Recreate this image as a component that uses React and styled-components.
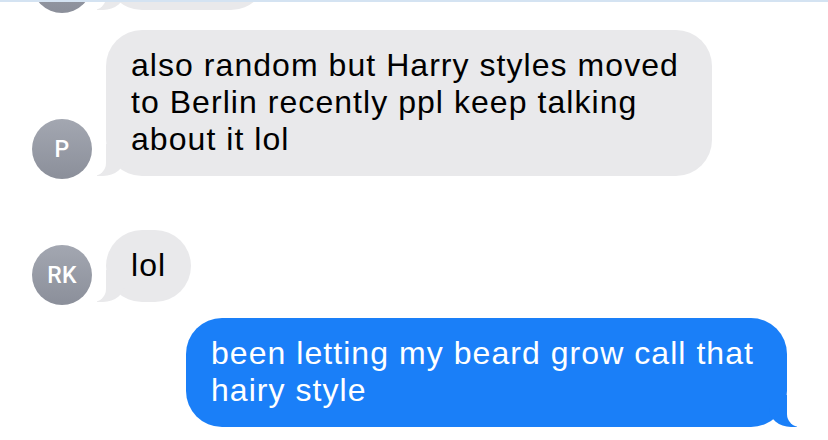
import React from "react";
import styled, { createGlobalStyle } from "styled-components";

const GlobalStyle = createGlobalStyle`
  html, body { margin: 0; padding: 0; background: #ffffff; }
  body { font-family: "Liberation Sans", Arial, sans-serif; }
  * { box-sizing: border-box; }
`;

const Page = styled.div`
  width: 828px;
  height: 440px;
  overflow: hidden;
  background: #ffffff;
  border-top: 2px solid #d4e3f2;
`;

const Thread = styled.div`
  display: flex;
  flex-direction: column;
  margin-top: -64px;
`;

const Row = styled.div`
  display: flex;
  align-items: flex-end;
  justify-content: ${(p) => (p.$mine ? "flex-end" : "flex-start")};
  margin-top: ${(p) => p.$gap || 0}px;
  padding: ${(p) => (p.$mine ? "0 41px 0 0" : "0 0 0 32px")};
`;

const Avatar = styled.div`
  position: relative;
  z-index: 3;
  flex: 0 0 auto;
  width: 60px;
  height: 60px;
  border-radius: 50%;
  background: linear-gradient(180deg, #a3a7b1 0%, #8b8f9a 100%);
  color: #ffffff;
  display: flex;
  align-items: center;
  justify-content: center;
  font-family: Roboto, "Liberation Sans", Arial, sans-serif;
  font-size: 23px;
  font-weight: 500;
  letter-spacing: 0.2px;
`;

const Bubble = styled.div`
  position: relative;
  margin: ${(p) => (p.$mine ? "0" : "0 0 3px 14px")};
  max-width: ${(p) => p.$max || 606}px;
  width: ${(p) => (p.$w ? `${p.$w}px` : "auto")};
  min-height: 72px;
  padding: 17px 25px 18px 25px;
  border-radius: 36px;
  background: ${(p) => (p.$mine ? "#1a7ff8" : "#e9e9eb")};
  color: ${(p) => (p.$mine ? "#ffffff" : "#000000")};
  font-family: "Liberation Sans", Arial, sans-serif;
  font-size: 32px;
  line-height: 37px;
  letter-spacing: 1.05px;

  &::before {
    content: "";
    position: absolute;
    bottom: 0;
    height: 32px;
    width: 28px;
    background: ${(p) => (p.$mine ? "#1a7ff8" : "#e9e9eb")};
    ${(p) =>
      p.$mine
        ? "right: -10px; border-bottom-left-radius: 22px 19px;"
        : "left: -9px; border-bottom-right-radius: 22px 19px;"}
  }

  &::after {
    content: "";
    position: absolute;
    bottom: 0;
    height: 34px;
    width: 22px;
    background: #ffffff;
    ${(p) =>
      p.$mine
        ? "right: -22px; border-bottom-left-radius: 13px;"
        : "left: -22px; border-bottom-right-radius: 13px;"}
  }
`;

const Text = styled.span`
  position: relative;
  z-index: 2;
`;

export default function App() {
  return (
    <>
      <GlobalStyle />
      <Page>
        <Thread>
          <Row>
            <Avatar />
            <Bubble $w={161} />
          </Row>
          <Row $gap={17}>
            <Avatar>P</Avatar>
            <Bubble $max={606}>
              <Text>
                also random but Harry styles moved to Berlin recently ppl keep
                talking about it lol
              </Text>
            </Bubble>
          </Row>
          <Row $gap={51}>
            <Avatar>RK</Avatar>
            <Bubble>
              <Text>lol</Text>
            </Bubble>
          </Row>
          <Row $mine $gap={13}>
            <Bubble $mine $max={601}>
              <Text>been letting my beard grow call that hairy style</Text>
            </Bubble>
          </Row>
        </Thread>
      </Page>
    </>
  );
}
